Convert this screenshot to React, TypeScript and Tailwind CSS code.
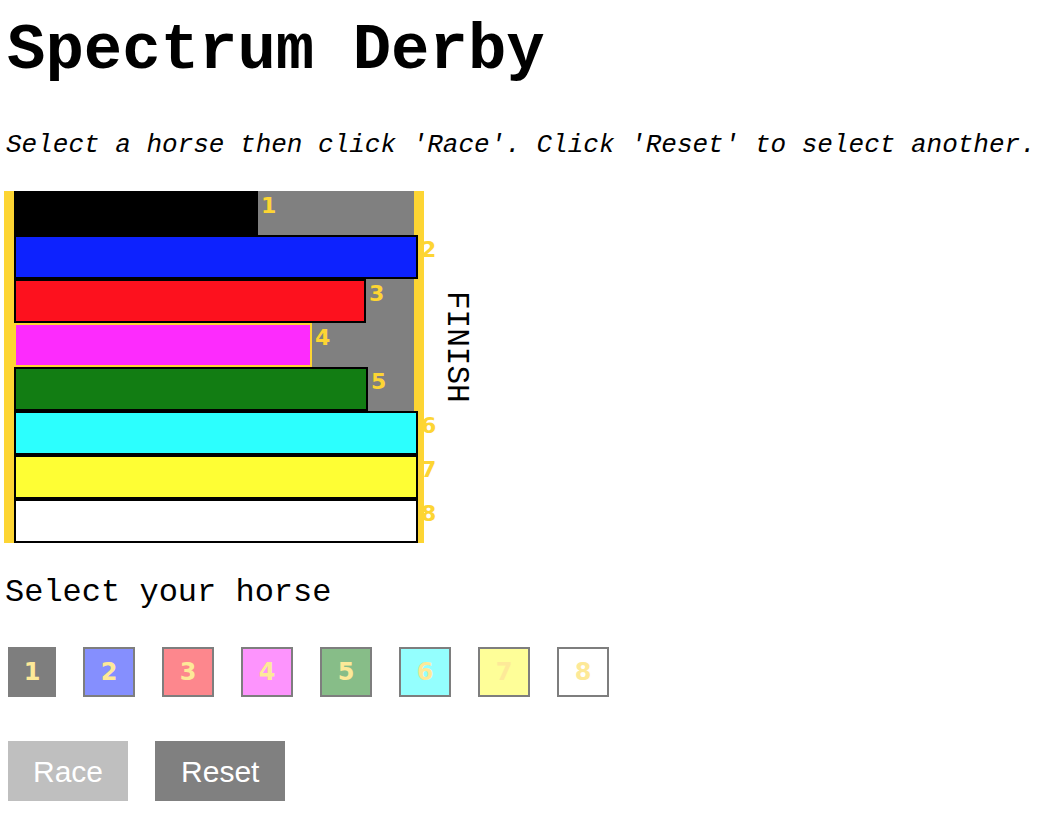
import React from 'react';

const horses = [
  { id: 1, color: 'bg-[#000000]', border: 'border-black', width: 'w-[244px]' },
  { id: 2, color: 'bg-[#0d22fe]', border: 'border-black', width: 'w-[404px]' },
  { id: 3, color: 'bg-[#fd111e]', border: 'border-black', width: 'w-[352px]' },
  { id: 4, color: 'bg-[#fd2bfd]', border: 'border-[#fdd533]', width: 'w-[298px]' },
  { id: 5, color: 'bg-[#127d13]', border: 'border-black', width: 'w-[354px]' },
  { id: 6, color: 'bg-[#2cfffe]', border: 'border-black', width: 'w-[404px]' },
  { id: 7, color: 'bg-[#fefe34]', border: 'border-black', width: 'w-[404px]' },
  { id: 8, color: 'bg-white', border: 'border-black', width: 'w-[404px]' },
];

const mono = "font-['Liberation_Mono','Courier_New',monospace]";

export default function App() {
  return (
    <div className="min-h-screen bg-white pl-1 text-black">
      {/* Title */}
      <h1 className={`${mono} pl-[3px] pt-[15px] text-[64px] font-bold leading-[72px]`}>Spectrum Derby</h1>
      <p className={`${mono} mt-[43px] pl-[2px] text-[26px] italic leading-[30px]`}>
        Select a horse then click 'Race'. Click 'Reset' to select another.
      </p>

      {/* Track */}
      <div className="mt-[31px] flex items-start">
        <div className="w-[420px] shrink-0 border-x-[10px] border-[#fdd533] bg-[#808080]">
          {horses.map((h) => (
            <div key={h.id} className="flex h-[44px] items-start">
              <div className={`h-[44px] shrink-0 border-2 ${h.width} ${h.color} ${h.border}`} />
              <span className="ml-[3px] mt-[2px] shrink-0 font-['DejaVu_Sans',sans-serif] text-[22px] font-bold leading-[25px] text-[#fdd533]">
                {h.id}
              </span>
            </div>
          ))}
        </div>
        <div className={`${mono} ml-[16px] mt-[100px] text-[31px] leading-[32px] [writing-mode:vertical-rl]`}>
          FINISH
        </div>
      </div>

      <p className={`${mono} mt-[32px] pl-[1px] text-[32px] leading-[36px]`}>Select your horse</p>

      {/* Horse picker */}
      <div className="ml-1 mt-[36px] flex gap-[27px]">
        {horses.map((h) => (
          <button
            key={h.id}
            className={`flex h-[50px] items-center justify-center opacity-50 ${h.color} ${
              h.id === 1 ? 'w-[48px]' : 'w-[52px] border-2 border-black'
            }`}
          >
            <span className="font-['DejaVu_Sans',sans-serif] text-[24px] font-bold leading-[28px] text-[#fdd533]">
              {h.id}
            </span>
          </button>
        ))}
      </div>

      {/* Actions */}
      <div className="ml-1 mt-[44px] flex gap-[27px] font-['Liberation_Sans',Arial,sans-serif]">
        <button className="h-[60px] bg-[#808080] px-[25px] text-[30px] text-white opacity-50">Race</button>
        <button className="h-[60px] bg-[#808080] px-[26px] text-[30px] text-white">Reset</button>
      </div>
    </div>
  );
}
